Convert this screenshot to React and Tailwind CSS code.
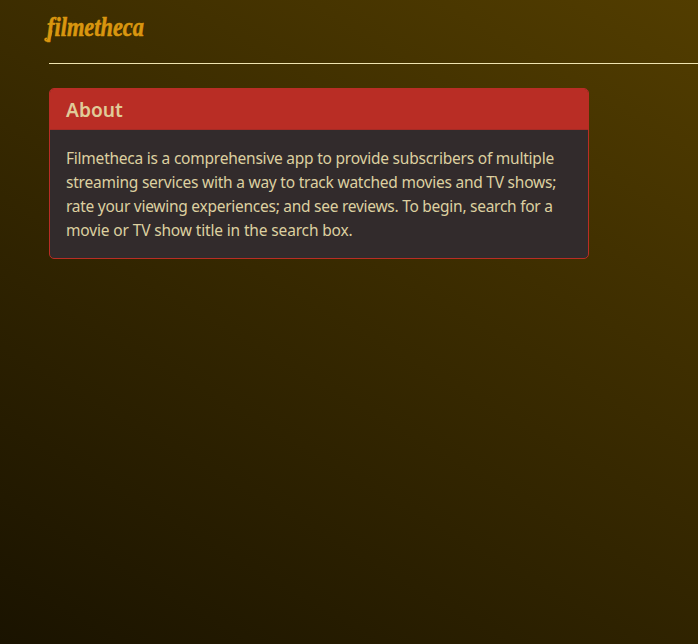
const aboutLines = [
  { text: "Filmetheca is a comprehensive app to provide subscribers of multiple", spacing: "tracking-[-0.228px]" },
  { text: "streaming services with a way to track watched movies and TV shows;", spacing: "tracking-[-0.228px]" },
  { text: "rate your viewing experiences; and see reviews. To begin, search for a", spacing: "tracking-[-0.265px]" },
  { text: "movie or TV show title in the search box.", spacing: "tracking-[-0.15px]" },
];

function Header() {
  return (
    <header className="h-16 border-b border-[#f0e4b0]">
      <svg className="-ml-2 block h-14 w-28 overflow-visible" viewBox="0 0 112 56" aria-label="filmetheca">
        <path
          d="M10.5 31C9.5 36 8.5 40.5 5.8 40.7C4 40.8 3.6 38.8 5.2 38.4"
          className="fill-none stroke-[#d9960f] stroke-2"
          strokeLinecap="round"
        />
        <text
          x="6"
          y="36"
          textLength="97"
          lengthAdjust="spacingAndGlyphs"
          className="fill-[#d9960f] stroke-[#d9960f] stroke-[0.6px] font-['Liberation_Serif',serif] text-[27.5px] font-bold italic"
        >
          filmetheca
        </text>
      </svg>
    </header>
  );
}

function AboutCard() {
  return (
    <section className="mt-6 w-[540px] overflow-hidden rounded-[5px] border border-[#b92d25] bg-[#322b2c] text-[#ddd0a0]">
      <h2 className="box-content h-10 border-b border-[#a62b25] bg-[#b92d25] px-4 font-['Noto_Sans',sans-serif] text-[19.2px] leading-[42px] font-semibold text-[#e0cb98]">
        About
      </h2>
      <p className="h-32 px-4 pt-4 font-['Noto_Sans',sans-serif] text-[15.5px] leading-6 whitespace-nowrap">
        {aboutLines.map((line) => (
          <span key={line.text} className="block">
            <span className={line.spacing}>{line.text}</span>
          </span>
        ))}
      </p>
    </section>
  );
}

export default function App() {
  return (
    <main className="h-screen overflow-hidden bg-[linear-gradient(30deg,#1a1300,#523d00)] pl-[49px]">
      <Header />
      <AboutCard />
    </main>
  );
}
